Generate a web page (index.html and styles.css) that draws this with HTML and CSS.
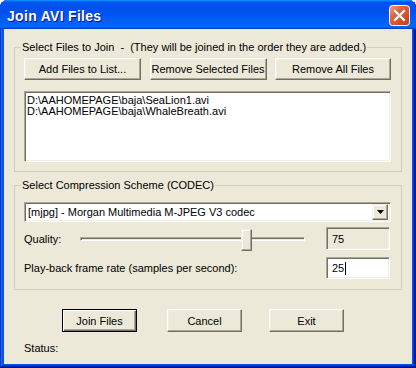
FILE: index.html
```html
<!DOCTYPE html>
<html lang="en">
<head>
  <meta charset="UTF-8" />
  <title>Join AVI Files</title>
  <link rel="stylesheet" href="styles.css">
</head>
<body>
  <div class="window">
    <div class="titlebar">
      <span class="title">Join AVI Files</span>
      <span class="close">
        <svg width="21" height="21" viewBox="0 0 21 21">
          <defs>
            <linearGradient id="closeFill" x1="0" y1="0" x2="1" y2="1">
              <stop offset="0" stop-color="#f4a184"/>
              <stop offset="0.35" stop-color="#df6542"/>
              <stop offset="1" stop-color="#c13b17"/>
            </linearGradient>
          </defs>
          <rect x="0.5" y="0.5" width="20" height="20" rx="3" fill="url(#closeFill)" stroke="#fff"/>
          <path d="M6 6 L15 15 M15 6 L6 15" stroke="#fff" stroke-width="2.2" stroke-linecap="square"/>
        </svg>
      </span>
    </div>

    <div class="client">
      <fieldset class="group files">
        <legend>Select Files to Join &nbsp;-&nbsp; (They will be joined in the order they are added.)</legend>
        <div class="btn-row">
          <button class="btn wide">Add Files to List...</button>
          <button class="btn wide">Remove Selected Files</button>
          <button class="btn wide last">Remove All Files</button>
        </div>
        <div class="listbox">
          <div class="item">D:\AAHOMEPAGE\baja\SeaLion1.avi</div>
          <div class="item">D:\AAHOMEPAGE\baja\WhaleBreath.avi</div>
        </div>
      </fieldset>

      <fieldset class="group codec">
        <legend>Select Compression Scheme (CODEC)</legend>
        <div class="combo">
          <span class="combo-text">[mjpg] - Morgan Multimedia M-JPEG V3 codec</span>
          <span class="drop">
            <svg width="7" height="4" viewBox="0 0 7 4"><path d="M0 0 H7 L3.5 4 Z" fill="#000"/></svg>
          </span>
        </div>
        <div class="row quality">
          <span class="label">Quality:</span>
          <div class="slider">
            <div class="track"></div>
            <div class="thumb" style="left: 161px"></div>
          </div>
          <div class="field readonly">75</div>
        </div>
        <div class="row rate">
          <span class="label">Play-back frame rate (samples per second):</span>
          <div class="field">25<span class="caret"></span></div>
        </div>
      </fieldset>

      <div class="actions">
        <button class="btn act default">Join Files</button>
        <button class="btn act cancel">Cancel</button>
        <button class="btn act exit">Exit</button>
      </div>
      <div class="status">Status:</div>
    </div>
  </div>
</body>
</html>
```

FILE: styles.css
```css
* {
  box-sizing: border-box;
}
body {
  margin: 0;
  font-family: "Liberation Sans", Arial, sans-serif;
  font-size: 11px;
  color: #000;
}
.window {
  width: 416px;
  height: 368px;
  display: flex;
  flex-direction: column;
  background: #0055ea;
  border-radius: 8px 8px 0 0;
  box-shadow: inset -1px -1px #00138c, inset 1px 1px #0831d9,
    inset -2px -2px #001ea0, inset 2px 2px #166aee,
    inset -3px -3px #003bda, inset 3px 3px #0855dd;
}
.titlebar {
  height: 29px;
  display: flex;
  align-items: flex-start;
  padding: 0 6px 0 7px;
  border-radius: 8px 8px 0 0;
  background: linear-gradient(180deg, #0997ff, #0053ee 8%, #0050ee 40%, #0066ff 88%, #0066ff 93%, #005bff 95%, #003dd7 96%, #003dd7);
}
.title {
  margin-top: 9px;
  line-height: 15px;
  font-weight: bold;
  font-size: 14px;
  letter-spacing: 0.3px;
  color: #fff;
  text-shadow: 1px 1px #0f1089;
}
.close {
  margin: 5px 0 0 auto;
  width: 21px;
  height: 21px;
  display: flex;
}
.client {
  flex: 1;
  margin: 0 4px 4px;
  background: #ece9d8;
  padding: 12px 10px 0;
}
.group {
  margin: 0;
  border: 1px solid #d0d0bf;
  padding: 4px 10px 9px 9px;
}
.group legend {
  padding: 0 1px;
  margin-left: -3px;
  line-height: 13px;
}
.codec {
  margin-top: 7px;
  padding-top: 10px;
  padding-bottom: 10px;
}
.btn {
  font: inherit;
  color: #000;
  background: #ece9d8;
  border: 1px solid;
  border-color: #fff #716f64 #716f64 #fff;
  box-shadow: inset -1px -1px #aca899, inset 1px 1px #f1efe2;
  padding: 0;
  height: 22px;
}
.btn-row {
  display: flex;
  justify-content: space-between;
}
.btn.wide {
  width: 117px;
}
.btn.last {
  width: 116px;
}
.listbox,
.combo,
.field {
  border: 1px solid;
  border-color: #aca899 #fff #fff #aca899;
  box-shadow: inset 1px 1px #716f64, inset -1px -1px #f1efe2;
  background: #fff;
}
.listbox {
  margin-top: 11px;
  height: 71px;
  padding: 3px 2px;
}
.item {
  line-height: 11px;
}
.combo {
  height: 20px;
  display: flex;
  align-items: center;
  padding: 0 2px 0 3px;
}
.drop {
  margin-left: auto;
  width: 16px;
  height: 16px;
  display: flex;
  align-items: center;
  justify-content: center;
  background: #ece9d8;
  border: 1px solid;
  border-color: #f1efe2 #716f64 #716f64 #f1efe2;
  box-shadow: inset -1px -1px #aca899, inset 1px 1px #fff;
}
.row {
  display: flex;
  align-items: center;
}
.quality {
  margin-top: 5px;
  height: 23px;
}
.rate {
  margin-top: 7px;
  height: 22px;
}
.quality .label {
  width: 56px;
}
.slider {
  position: relative;
  width: 225px;
  height: 23px;
  display: flex;
  align-items: center;
}
.track {
  width: 100%;
  height: 4px;
  border: 1px solid;
  border-color: #aca899 #fff #fff #aca899;
  box-shadow: inset 1px 1px #716f64;
  background: #ece9d8;
}
.thumb {
  position: absolute;
  top: 2px;
  width: 11px;
  height: 22px;
  background: #ece9d8;
  border: 1px solid;
  border-color: #f1efe2 #716f64 #716f64 #f1efe2;
  box-shadow: inset -1px -1px #aca899, inset 1px 1px #fff;
}
.field {
  width: 64px;
  height: 100%;
  margin: 0 1px 0 auto;
  display: flex;
  align-items: center;
  padding-left: 5px;
}
.field.readonly {
  background: #ece9d8;
}
.caret {
  width: 1px;
  height: 13px;
  background: #000;
  margin-left: 1px;
}
.actions {
  margin-top: 19px;
  display: flex;
  padding-left: 48px;
}
.btn.act {
  width: 75px;
  height: 23px;
}
.btn.default {
  border: 1px solid #000;
  box-shadow: inset 1px 1px #fff, inset -1px -1px #716f64, inset -2px -2px #aca899;
}
.btn.cancel {
  margin-left: 30px;
}
.btn.exit {
  margin-left: 27px;
}
.status {
  margin-top: 10px;
  padding-left: 10px;
  line-height: 13px;
}
```
